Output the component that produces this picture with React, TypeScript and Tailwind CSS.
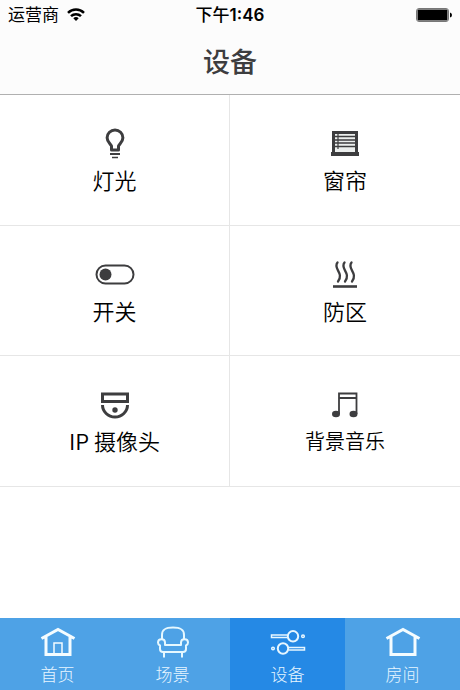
import type { ReactNode } from "react";

const BulbIcon = () => (
  <svg width="40" height="40" viewBox="0 0 40 40" fill="none" stroke="#3d3d3f" strokeWidth="3" aria-hidden="true">
    <path d="M16.500 27v-4c-1-2.300-4.400-4-4.400-8.300a7.900 7.700 0 0 1 15.800 0c0 4.300-3.400 6-4.400 8.300v4z" strokeLinejoin="round" />
    <path d="M15 31h10" strokeWidth="2" />
    <path d="M17 34.500h6" strokeWidth="1.500" />
  </svg>
);

const BlindIcon = () => (
  <svg width="40" height="40" viewBox="0 0 40 40" fill="none" stroke="#3d3d3f" aria-hidden="true">
    <rect x="8.500" y="9.500" width="23" height="22" fill="#ecefee" strokeWidth="3" />
    <path d="M10 13.500h20M10 17h20M10 20h20M10 23.500h20" strokeWidth="1.500" />
    <path d="M13 10v16" strokeWidth="1.200" />
    <path d="M6 31h28" strokeWidth="4" />
  </svg>
);

const SwitchIcon = () => (
  <svg width="40" height="40" viewBox="0 0 40 40" fill="none" aria-hidden="true">
    <rect x="1.500" y="11.500" width="37" height="18" rx="9" stroke="#3d3d3f" strokeWidth="2" />
    <circle cx="10.500" cy="20.500" r="6" fill="#3d3d3f" />
  </svg>
);

const HeatIcon = () => (
  <svg width="40" height="40" viewBox="0 0 40 40" fill="none" stroke="#3d3d3f" strokeWidth="2.300" aria-hidden="true">
    <path d="M12.500 8.500c-5 6 7 10.500.5 19M19.500 8.500c-5 6 7 10.500.5 19M26.500 8.500c-5 6 7 10.500.5 19" strokeLinecap="round" />
    <path d="M8 32.500h24" strokeWidth="2.600" />
  </svg>
);

const CameraIcon = () => (
  <svg width="40" height="40" viewBox="0 0 40 40" fill="none" stroke="#3d3d3f" strokeWidth="3" aria-hidden="true">
    <rect x="7.500" y="10" width="25" height="7.500" />
    <path d="M7.500 21a12.500 12 0 0 0 25 0" />
    <circle cx="20" cy="26" r="2.700" fill="#3d3d3f" stroke="none" />
  </svg>
);

const MusicIcon = () => (
  <svg width="40" height="40" viewBox="0 0 40 40" fill="none" stroke="#3d3d3f" strokeWidth="1.800" aria-hidden="true">
    <path d="M14 30V9.500h17.500V30M14 14h17.500" />
    <ellipse cx="11" cy="30" rx="4" ry="3.200" fill="#3d3d3f" stroke="none" />
    <ellipse cx="28.500" cy="30" rx="4" ry="3.200" fill="#3d3d3f" stroke="none" />
  </svg>
);

const HomeIcon = () => (
  <svg width="36" height="36" viewBox="0 0 36 36" fill="none" stroke="#f4fcff" strokeWidth="3" aria-hidden="true">
    <path d="M1.500 14.500 18 5.500l16.500 9M6 13v17.500h24V13" />
    <path d="M14 29V19h8v10" strokeWidth="1.500" />
  </svg>
);

const SofaIcon = () => (
  <svg width="36" height="36" viewBox="0 0 36 36" fill="none" stroke="#e6f8ff" strokeWidth="2" strokeLinejoin="round" aria-hidden="true">
    <path d="M7 15V11C7 5 11 3.500 18 3.500S29 5 29 11v4" />
    <path d="M10 21v-2.500C10 14 3 14 3 18.500c0 1.500.8 2.500 2 3V25q0 3 3 3h20q3 0 3-3v-3.500c1.200-.5 2-1.500 2-3 0-4.500-7-4.500-7 0V21z" />
    <path d="M9 28v5.500M27 28v5.500" />
  </svg>
);

const DevicesIcon = () => (
  <svg width="36" height="36" viewBox="0 0 36 36" fill="none" stroke="#e6f6ff" strokeWidth="1.500" aria-hidden="true">
    <path d="M17.500 13.500H1.500v-2.500h16M18.500 23.500h16v2.500h-16" />
    <circle cx="23" cy="12.300" r="5.200" strokeWidth="2" />
    <circle cx="13" cy="24.500" r="5.200" strokeWidth="2" />
    <circle cx="33" cy="12.300" r="1.300" />
    <circle cx="3" cy="24.500" r="1.300" />
  </svg>
);

const RoomIcon = () => (
  <svg width="36" height="36" viewBox="0 0 36 36" fill="none" stroke="#f4fcff" strokeWidth="3" aria-hidden="true">
    <path d="M1.500 14.500 18 5.500l16.500 9M6 13v17.500h24V13" />
  </svg>
);

type Item = { label: string; icon: ReactNode; compact?: boolean };

const devices: Item[] = [
  { label: "灯光", icon: <BulbIcon /> },
  { label: "窗帘", icon: <BlindIcon /> },
  { label: "开关", icon: <SwitchIcon /> },
  { label: "防区", icon: <HeatIcon /> },
  { label: "IP 摄像头", icon: <CameraIcon /> },
  { label: "背景音乐", icon: <MusicIcon />, compact: true },
];

const tabs: Item[] = [
  { label: "首页", icon: <HomeIcon /> },
  { label: "场景", icon: <SofaIcon /> },
  { label: "设备", icon: <DevicesIcon /> },
  { label: "房间", icon: <RoomIcon /> },
];

export default function App() {
  return (
    <div className="flex min-h-screen flex-col bg-white font-['Inter','Noto_Sans_CJK_SC',sans-serif] text-black">
      <header className="border-b border-[#b0b0b0] bg-[#fcfcfc]">
        <div className="grid h-[30px] grid-cols-3 items-center px-2 text-[17px] leading-6">
          <div className="flex items-center gap-2">
            <span>运营商</span>
            <svg width="18" height="14" viewBox="0 0 18 14" fill="none" stroke="#000" strokeWidth="2.500" aria-label="Wi-Fi">
              <path d="M1 4.800a11.500 11.500 0 0 1 16 0M4 8.200a7.200 7.200 0 0 1 10 0" />
              <path d="M6.300 10.300a4 4 0 0 1 5.400 0L9 13z" fill="#000" stroke="none" />
            </svg>
          </div>
          <span className="text-center font-medium whitespace-nowrap">
            下午<span className="font-semibold">1:46</span>
          </span>
          <svg className="justify-self-end" width="36" height="14" viewBox="0 0 36 14" aria-label="电量">
            <rect x="0.500" y="0.500" width="32" height="13" rx="2.500" fill="#fff" stroke="#777" />
            <rect x="1.500" y="1.500" width="30" height="11" rx="1" fill="#000" />
            <path d="M34 4.500q2 .5 2 2.500t-2 2.500z" fill="#000" />
          </svg>
        </div>
        <h1 className="h-16 text-center text-[27px] leading-[66px] font-medium text-[#3d3d3f]">设备</h1>
      </header>

      <main className="flex-1">
        <div className="grid h-[392px] grid-cols-2 grid-rows-3 font-['Noto_Sans_CJK_SC',sans-serif] font-[350]">
          {devices.map(({ label, icon, compact }) => (
            <button
              key={label}
              type="button"
              className="flex flex-col items-center border-b border-[#e6e6e6] pt-7 odd:border-r"
            >
              {icon}
              <span className={compact ? "text-[20px] leading-[34px]" : "text-[22px] leading-8"}>{label}</span>
            </button>
          ))}
        </div>
      </main>

      <nav className="grid h-[72px] grid-cols-4 bg-[#4ea2e6]">
        {tabs.map(({ label, icon }) => (
          <button
            key={label}
            type="button"
            aria-current={label === "设备" ? "page" : undefined}
            className="flex flex-col items-center pt-1.5 text-[17px] leading-[30px] font-light text-[#e6f5ff] aria-[current=page]:bg-[#2589e5]"
          >
            {icon}
            <span>{label}</span>
          </button>
        ))}
      </nav>
    </div>
  );
}
